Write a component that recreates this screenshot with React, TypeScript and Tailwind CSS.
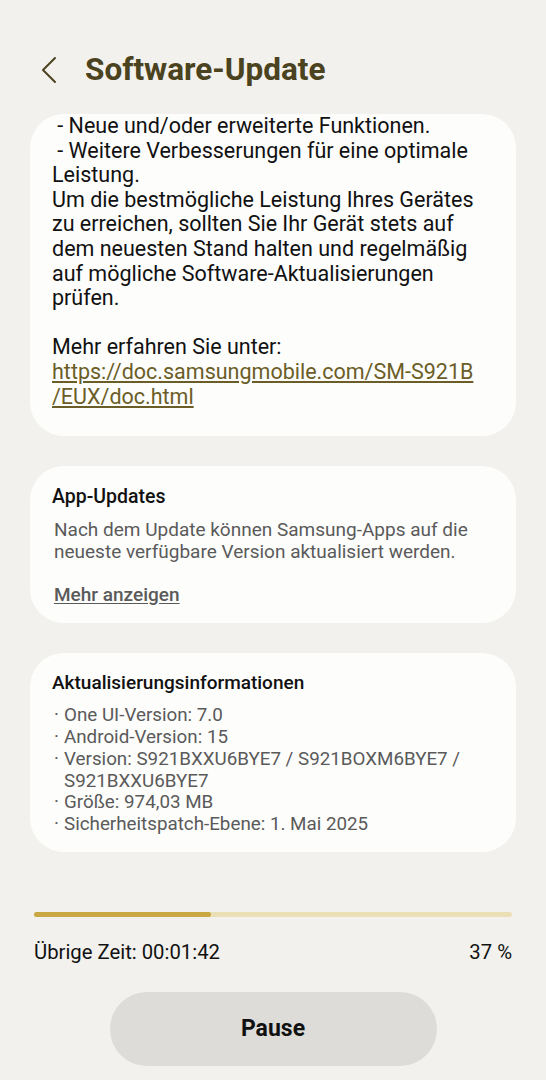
import React from "react";

const font = { fontFamily: "Roboto, 'Noto Sans', sans-serif" };

function Card({ className, children }: { className?: string; children: React.ReactNode }) {
  return <div className={"mx-[30px] rounded-[34px] bg-[#fdfdfc] " + (className ?? "")}>{children}</div>;
}

const notes = [
  " - Neue und/oder erweiterte Funktionen.",
  " - Weitere Verbesserungen für eine optimale",
  "Leistung.",
  "Um die bestmögliche Leistung Ihres Gerätes",
  "zu erreichen, sollten Sie Ihr Gerät stets auf",
  "dem neuesten Stand halten und regelmäßig",
  "auf mögliche Software-Aktualisierungen",
  "prüfen.",
  " ",
  "Mehr erfahren Sie unter:",
];

const infos = [
  "One UI-Version: 7.0",
  "Android-Version: 15",
  "Version: S921BXXU6BYE7 / S921BOXM6BYE7 / S921BXXU6BYE7",
  "Größe: 974,03 MB",
  "Sicherheitspatch-Ebene: 1. Mai 2025",
];

export default function App() {
  const progress = 37;

  return (
    <div className="flex h-[1080px] w-full flex-col overflow-hidden bg-[#f2f1ed] text-[#111]" style={font}>
      {/* Kopfzeile */}
      <div className="mt-[50px] flex h-[40px] items-center pl-[40px]">
        <svg width="18" height="28" viewBox="0 0 18 28" fill="none" className="mr-[27px]">
          <path d="M15 2 L3 14 L15 26" stroke="#4b4220" strokeWidth="2" strokeLinecap="round" strokeLinejoin="round" />
        </svg>
        <h1 className="text-[31.5px] font-bold leading-[40px] text-[#4b4220]">Software-Update</h1>
      </div>

      {/* Versionshinweise */}
      <Card className="mt-[24px] pb-[27px] pl-[22px] pr-[16px]">
        <div className="text-[21.5px] leading-[24.6px]">
          {notes.map((l, i) => (
            <p key={i} className="whitespace-pre">{l}</p>
          ))}
          <a className="block whitespace-nowrap text-[#6b5d27] underline underline-offset-2">
            https://doc.samsungmobile.com/SM-S921B
            <br />
            /EUX/doc.html
          </a>
        </div>
      </Card>

      {/* App-Updates */}
      <Card className="mt-[30px] pb-[17px] pl-[22px] pr-[20px] pt-[20px]">
        <h2 className="text-[19.5px] font-medium leading-[22px]">App-Updates</h2>
        <p className="mt-[11px] pl-[2px] text-[19px] leading-[22px] text-[#5a5a5a]">
          Nach dem Update können Samsung-Apps auf die neueste verfügbare Version aktualisiert werden.
        </p>
        <p className="mt-[21px] pl-[2px] text-[19px] font-medium leading-[22px] text-[#5a5a5a] underline underline-offset-2">
          Mehr anzeigen
        </p>
      </Card>

      {/* Aktualisierungsinformationen */}
      <Card className="mt-[30px] pb-[16px] pl-[22px] pr-[20px] pt-[19px]">
        <h2 className="text-[19px] font-medium leading-[22px]">Aktualisierungsinformationen</h2>
        <ul className="mt-[11px] text-[18.8px] leading-[21.8px] text-[#5a5a5a]">
          {infos.map((t) => (
            <li key={t} className="flex">
              <span className="w-[12px] shrink-0 pl-[2px]">·</span>
              <span>{t}</span>
            </li>
          ))}
        </ul>
      </Card>

      {/* Fortschritt */}
      <div className="mx-[34px] mt-[60px] h-[5px] rounded-full bg-[#ebdfb6]">
        <div className="h-full rounded-full bg-[#c9a843]" style={{ width: `${progress}%` }} />
      </div>
      <div className="mx-[34px] mt-[23px] flex justify-between text-[20.3px] leading-[24px]">
        <span>Übrige Zeit: 00:01:42</span>
        <span>{progress} %</span>
      </div>

      <div className="mt-[28px] flex justify-center">
        <button className="h-[74px] w-[327px] rounded-full bg-[#dddcd8] text-[23px] font-bold text-[#111]">
          Pause
        </button>
      </div>
    </div>
  );
}
